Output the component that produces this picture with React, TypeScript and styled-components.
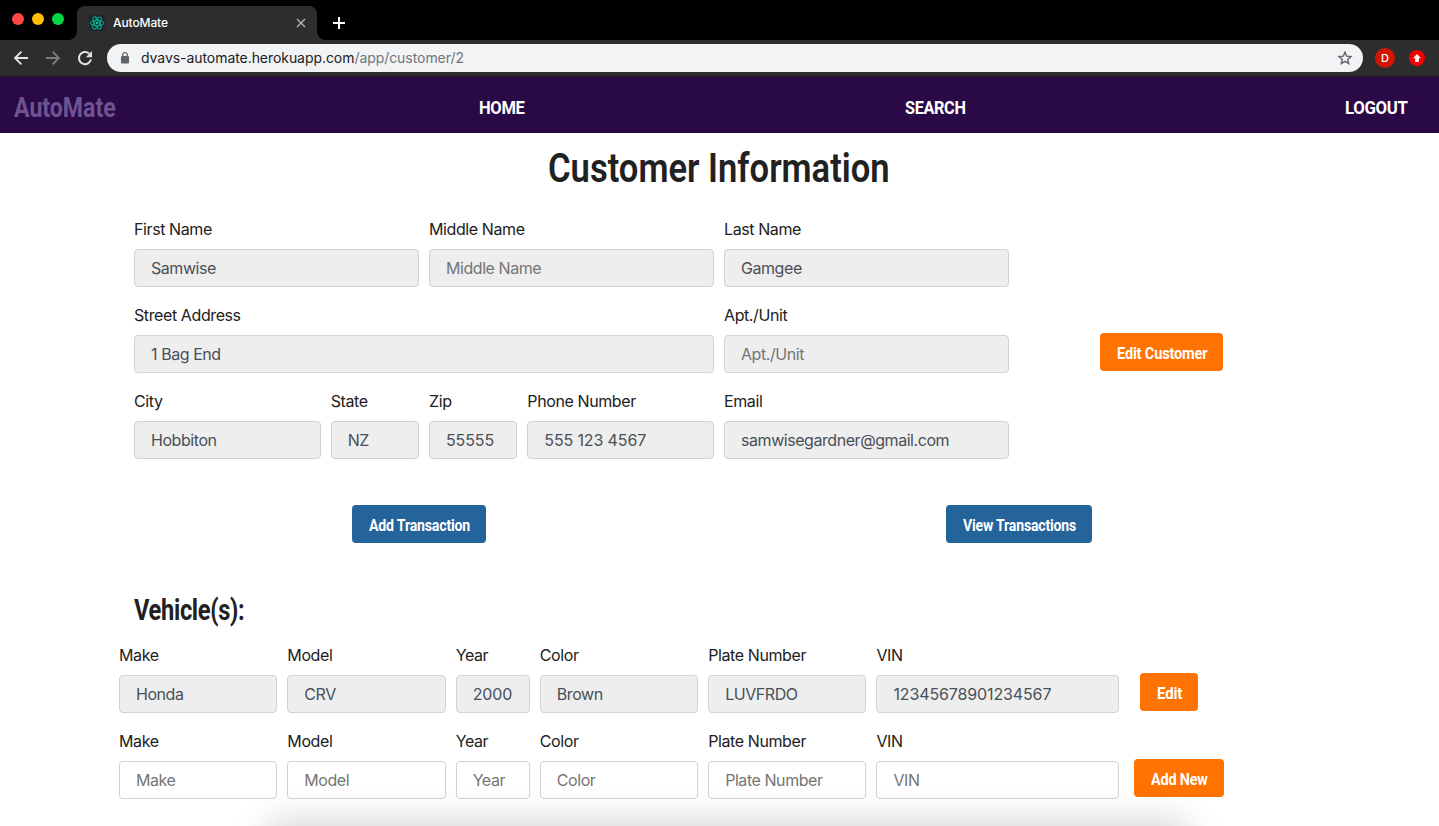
import React from "react";
import styled, { createGlobalStyle } from "styled-components";

const GlobalStyle = createGlobalStyle`
  *, *::before, *::after { box-sizing: border-box; }
  html, body { margin: 0; padding: 0; background: #fff; }
  body {
    font-family: Inter, "Liberation Sans", sans-serif;
    font-size: 16px;
    line-height: 24px;
    color: #212121;
    -webkit-font-smoothing: antialiased;
  }
`;

const Window = styled.div`
  position: relative;
  display: flex;
  flex-direction: column;
  width: 1439px;
  height: 826px;
  overflow: hidden;
  background: #fff;
`;

/* ---------- browser chrome ---------- */

const TabStrip = styled.div`
  display: flex;
  align-items: flex-end;
  flex: none;
  height: 40px;
  background: #000;
`;

const Lights = styled.div`
  display: flex;
  gap: 8px;
  width: 77px;
  height: 40px;
  padding: 13px 0 0 12px;
`;

const Light = styled.span<{ $color: string }>`
  width: 12px;
  height: 12px;
  border-radius: 50%;
  background: ${(p) => p.$color};
`;

const Tab = styled.div`
  position: relative;
  display: flex;
  align-items: center;
  width: 240px;
  height: 34px;
  padding: 0 11px 0 12px;
  border-radius: 8px 8px 0 0;
  background: #2d2d2d;
  color: #fff;
  font-size: 12px;
  font-weight: 500;
  letter-spacing: -0.1px;

  &::before,
  &::after {
    content: "";
    position: absolute;
    bottom: 0;
    width: 8px;
    height: 8px;
  }
  &::before {
    left: -8px;
    background: radial-gradient(circle at 0 0, transparent 7.5px, #2d2d2d 8px);
  }
  &::after {
    right: -8px;
    background: radial-gradient(circle at 100% 0, transparent 7.5px, #2d2d2d 8px);
  }
`;

const TabTitle = styled.span`
  flex: 1;
  margin-left: 8px;
  line-height: 34px;
`;

const NewTab = styled.div`
  display: flex;
  align-items: center;
  height: 34px;
  margin-left: 16px;
`;

const Toolbar = styled.div`
  display: flex;
  align-items: center;
  flex: none;
  height: 37px;
  padding: 0 14px 1px 13px;
  background: #2d2d2d;
  border-bottom: 1px solid #241c2b;
`;

const ToolIcons = styled.div`
  display: flex;
  gap: 16px;
  margin-right: 14px;
  svg { display: block; }
`;

const AddressBar = styled.div`
  display: flex;
  align-items: center;
  width: 1256px;
  height: 28px;
  padding: 0 10px 0 12px;
  border-radius: 14px;
  background: #f1f3f4;
  color: #202124;
  font-size: 14px;
  line-height: 28px;
`;

const Url = styled.span`
  flex: 1;
  margin-left: 10px;
  letter-spacing: -0.06px;
`;

const UrlPath = styled.span`
  color: #70757a;
`;

const Avatar = styled.span`
  display: flex;
  align-items: center;
  justify-content: center;
  width: 20px;
  height: 20px;
  margin: 0 14px 0 12px;
  border-radius: 50%;
  background: #d21502;
  color: #fff;
  font-size: 11px;
  font-weight: 500;
`;

/* ---------- shared type ---------- */

const CondensedBox = styled.span<{ $width: number }>`
  display: block;
  flex: none;
  width: ${(p) => p.$width}px;
  white-space: nowrap;
  font-family: Roboto, "Liberation Sans", sans-serif;
`;

const CondensedText = styled.span<{ $scale: number }>`
  display: inline-block;
  transform: scaleX(${(p) => p.$scale});
  transform-origin: 0 50%;
`;

function Condensed({ width, scale, children }: { width: number; scale: number; children: string }) {
  return (
    <CondensedBox $width={width}>
      <CondensedText $scale={scale}>{children}</CondensedText>
    </CondensedBox>
  );
}

/* ---------- site header ---------- */

const NavBar = styled.nav`
  display: flex;
  align-items: center;
  flex: none;
  height: 56px;
  padding: 5px 31px 0 14px;
  background: #290a47;
`;

const Brand = styled.div`
  font-size: 27px;
  font-weight: 700;
  color: #6f5391;
`;

const NavLinks = styled.div`
  display: flex;
  flex: 1;
  justify-content: space-between;
  margin-left: 363px;
  font-size: 19px;
  font-weight: 700;
  letter-spacing: -0.4px;
  color: #fff;
`;

/* ---------- page ---------- */

const PageTitle = styled.h1`
  display: flex;
  align-items: center;
  justify-content: center;
  height: 70px;
  margin: 0 0 14px;
  font-size: 41px;
  font-weight: 600;
  line-height: 48px;
`;

const Container = styled.main`
  width: 1200px;
  margin-left: 119px;
`;

const CustomerSection = styled.section`
  display: flex;
  height: 270px;
  padding-left: 15px;
`;

const CustomerForm = styled.div`
  display: grid;
  grid-template-columns: repeat(9, 1fr);
  align-content: start;
  gap: 16px 10px;
  width: 875px;
`;

const CustomerAction = styled.div`
  display: flex;
  align-items: center;
  justify-content: center;
  width: 295px;
  margin-left: 5px;
`;

const FieldBox = styled.label<{ $span: number }>`
  display: flex;
  flex-direction: column;
  gap: 8px;
  grid-column: span ${(p) => p.$span};
  min-width: 0;
  letter-spacing: -0.4px;
`;

const Input = styled.input<{ $tracking: number }>`
  display: block;
  width: 100%;
  height: 38px;
  padding: 6px 16px;
  border: 1px solid #ced4da;
  border-radius: 4px;
  background: #fff;
  color: #495057;
  font: inherit;
  letter-spacing: ${(p) => p.$tracking}px;

  &:disabled { background: #eee; opacity: 1; }
  &::placeholder { color: #757575; opacity: 1; }
`;

const Button = styled.button<{ $tone?: "orange" | "blue"; $left?: number; $top?: number }>`
  display: flex;
  flex: none;
  align-items: center;
  height: 38px;
  margin: ${(p) => p.$top ?? 0}px 0 0 ${(p) => p.$left ?? 0}px;
  padding: 4px 15.5px 0 16.5px;
  border: 0;
  border-radius: 4px;
  background: ${(p) => (p.$tone === "blue" ? "#25639b" : "#ff7300")};
  color: #fff;
  font-size: 16px;
  font-weight: 700;
  line-height: 24px;
  letter-spacing: -0.2px;
  text-align: left;
`;

const Transactions = styled.section`
  display: grid;
  grid-template-columns: 1fr 1fr;
  justify-items: center;
  height: 56px;
  padding-top: 18px;
`;

const SectionTitle = styled.h2`
  margin: 50px 0 16px;
  padding-left: 15px;
  font-size: 29px;
  font-weight: 700;
  letter-spacing: -0.4px;
  line-height: 34px;
`;

const VehicleRow = styled.div`
  display: flex;
  align-items: flex-start;
  margin-bottom: 16px;
`;

const VehicleFields = styled.div`
  display: grid;
  grid-template-columns: repeat(12, 1fr);
  gap: 10px;
  width: 1000px;
`;

const DockShadow = styled.div`
  position: absolute;
  left: 272px;
  right: 256px;
  bottom: -30px;
  height: 24px;
  border-radius: 12px;
  box-shadow: 0 0 38px 8px rgba(0, 0, 0, 0.2);
  pointer-events: none;
`;

type FieldData = { label: string; span: number; value?: string };

function Field({ label, span, value, editable }: FieldData & { editable?: boolean }) {
  const tracking = value && /^[\d ]+$/.test(value) ? -0.13 : -0.44;
  return (
    <FieldBox $span={span}>
      {label}
      <Input $tracking={tracking} placeholder={label} defaultValue={value} disabled={!editable} />
    </FieldBox>
  );
}

const customerFields: FieldData[] = [
  { label: "First Name", span: 3, value: "Samwise" },
  { label: "Middle Name", span: 3 },
  { label: "Last Name", span: 3, value: "Gamgee" },
  { label: "Street Address", span: 6, value: "1 Bag End" },
  { label: "Apt./Unit", span: 3 },
  { label: "City", span: 2, value: "Hobbiton" },
  { label: "State", span: 1, value: "NZ" },
  { label: "Zip", span: 1, value: "55555" },
  { label: "Phone Number", span: 2, value: "555 123 4567" },
  { label: "Email", span: 3, value: "samwisegardner@gmail.com" },
];

const vehicleFields: FieldData[] = [
  { label: "Make", span: 2, value: "Honda" },
  { label: "Model", span: 2, value: "CRV" },
  { label: "Year", span: 1, value: "2000" },
  { label: "Color", span: 2, value: "Brown" },
  { label: "Plate Number", span: 2, value: "LUVFRDO" },
  { label: "VIN", span: 3, value: "12345678901234567" },
];

function BrowserChrome() {
  return (
    <>
      <TabStrip>
        <Lights>
          <Light $color="#ff4744" />
          <Light $color="#ffbd05" />
          <Light $color="#00d742" />
        </Lights>
        <Tab>
          <svg width="16" height="16" viewBox="0 0 16 16" fill="none" stroke="#00b894" strokeWidth="0.9">
            <rect width="16" height="16" fill="#20262e" stroke="none" />
            <ellipse cx="8" cy="8" rx="6.9" ry="2.7" />
            <ellipse cx="8" cy="8" rx="6.9" ry="2.7" transform="rotate(60 8 8)" />
            <ellipse cx="8" cy="8" rx="6.9" ry="2.7" transform="rotate(120 8 8)" />
            <circle cx="8" cy="8" r="1.3" fill="#00c9a0" stroke="none" />
          </svg>
          <TabTitle>AutoMate</TabTitle>
          <svg width="10" height="10" viewBox="0 0 10 10" stroke="#b4b4b4" strokeWidth="1.4">
            <path d="M1 1l8 8M9 1L1 9" />
          </svg>
        </Tab>
        <NewTab>
          <svg width="12" height="12" viewBox="0 0 12 12" stroke="#fff" strokeWidth="2">
            <path d="M6 0v12M0 6h12" />
          </svg>
        </NewTab>
      </TabStrip>
      <Toolbar>
        <ToolIcons>
          <svg width="16" height="16" viewBox="0 0 16 16" fill="none" stroke="#e3e3e3" strokeWidth="1.9">
            <path d="M15 8H2.4M8.4 1.7L2.1 8l6.3 6.3" />
          </svg>
          <svg width="16" height="16" viewBox="0 0 16 16" fill="none" stroke="#7c7c7c" strokeWidth="1.9">
            <path d="M1 8h12.6M7.6 1.7L13.9 8l-6.3 6.3" />
          </svg>
          <svg width="16" height="16" viewBox="0 0 16 16" fill="none" stroke="#e3e3e3" strokeWidth="2">
            <path d="M14 9.4A6.1 6.1 0 1 1 12.2 3.6" />
            <path d="M15 1v6.2H8.8z" fill="#e3e3e3" stroke="none" />
          </svg>
        </ToolIcons>
        <AddressBar>
          <svg width="12" height="14" viewBox="0 0 12 14">
            <rect x="2" y="5" width="8" height="7.6" rx="1" fill="#5f6368" />
            <path d="M3.7 5.5V3.8a2.3 2.3 0 0 1 4.6 0v1.7" fill="none" stroke="#5f6368" strokeWidth="1.2" />
          </svg>
          <Url>
            dvavs-automate.herokuapp.com<UrlPath>/app/customer/2</UrlPath>
          </Url>
          <svg width="16" height="16" viewBox="0 0 16 16" fill="none" stroke="#5f6368" strokeWidth="1.4">
            <path d="M8 2.2l1.7 4 4.3.4-3.3 2.8 1 4.2L8 11.4l-3.7 2.2 1-4.2L2 6.6l4.3-.4z" />
          </svg>
        </AddressBar>
        <Avatar>D</Avatar>
        <svg width="16" height="16" viewBox="0 0 16 16">
          <circle cx="8" cy="8" r="8" fill="#f00000" />
          <path d="M8 4l4 4.2H9.8V12H6.2V8.2H4z" fill="#fff" />
        </svg>
      </Toolbar>
    </>
  );
}

export default function App() {
  return (
    <Window>
      <GlobalStyle />
      <BrowserChrome />
      <NavBar>
        <Brand>
          <Condensed width={102} scale={0.855}>AutoMate</Condensed>
        </Brand>
        <NavLinks>
          <Condensed width={46} scale={0.872}>HOME</Condensed>
          <Condensed width={61} scale={0.855}>SEARCH</Condensed>
          <Condensed width={63} scale={0.883}>LOGOUT</Condensed>
        </NavLinks>
      </NavBar>
      <PageTitle>
        <Condensed width={343} scale={0.843}>Customer Information</Condensed>
      </PageTitle>
      <Container>
        <CustomerSection>
          <CustomerForm>
            {customerFields.map((f) => (
              <Field key={f.label} {...f} />
            ))}
          </CustomerForm>
          <CustomerAction>
            <Button>
              <Condensed width={91} scale={0.912}>Edit Customer</Condensed>
            </Button>
          </CustomerAction>
        </CustomerSection>
        <Transactions>
          <Button $tone="blue">
            <Condensed width={102} scale={0.882}>Add Transaction</Condensed>
          </Button>
          <Button $tone="blue">
            <Condensed width={114} scale={0.878}>View Transactions</Condensed>
          </Button>
        </Transactions>
        <SectionTitle>
          <Condensed width={112} scale={0.815}>Vehicle(s):</Condensed>
        </SectionTitle>
        <VehicleRow>
          <VehicleFields>
            {vehicleFields.map((f) => (
              <Field key={f.label} {...f} />
            ))}
          </VehicleFields>
          <Button $left={21} $top={30}>
            <Condensed width={26} scale={0.94}>Edit</Condensed>
          </Button>
        </VehicleRow>
        <VehicleRow>
          <VehicleFields>
            {vehicleFields.map((f) => (
              <Field key={f.label} label={f.label} span={f.span} editable />
            ))}
          </VehicleFields>
          <Button $left={15} $top={30}>
            <Condensed width={58} scale={0.9}>Add New</Condensed>
          </Button>
        </VehicleRow>
      </Container>
      <DockShadow />
    </Window>
  );
}
